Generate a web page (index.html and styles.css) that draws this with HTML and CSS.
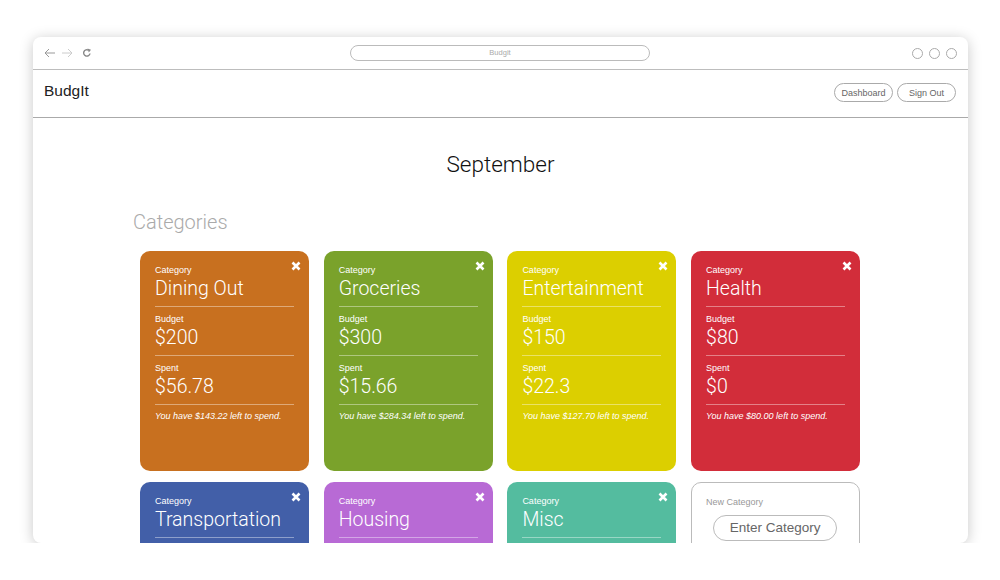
FILE: index.html
```html
<!DOCTYPE html>
<html lang="en">
<head>
    <meta charset="UTF-8">
    <meta name="viewport" content="width=device-width, initial-scale=1.0">
    <title>BudgIt</title>
    <link rel="stylesheet" href="styles.css">
</head>
<body>
    <div class="window">
        <div class="toolbar">
            <div class="nav-icons">
                <svg width="12" height="10" viewBox="0 0 12 10"><path d="M11 5H1M5 1L1 5l4 4" fill="none" stroke="#999" stroke-width="1"/></svg>
                <svg width="12" height="10" viewBox="0 0 12 10"><path d="M1 5h10M7 1l4 4-4 4" fill="none" stroke="#ccc" stroke-width="1"/></svg>
                <svg class="reload" width="10" height="10" viewBox="0 0 10 10"><path d="M8 5.5A3.2 3.2 0 1 1 6.5 2.2" fill="none" stroke="#888" stroke-width="1.4"/><path d="M5.5 0.5L9 1.8 6.8 4.6z" fill="#888"/></svg>
            </div>
            <div class="url-bar">Budgit</div>
            <div class="dots">
                <span class="dot"></span><span class="dot"></span><span class="dot"></span>
            </div>
        </div>

        <div class="header">
            <div class="logo">BudgIt</div>
            <div class="header-buttons">
                <button class="pill-btn">Dashboard</button>
                <button class="pill-btn">Sign Out</button>
            </div>
        </div>

        <div class="content">
            <h1 class="month">September</h1>
            <div class="section">
                <h2 class="section-title">Categories</h2>
                <div class="card-grid">
                    <div class="card orange">
                        <svg class="close" width="10" height="10" viewBox="0 0 10 10"><path d="M1.5 1.5l7 7M8.5 1.5l-7 7" stroke="#fff" stroke-width="2.6"/></svg>
                        <div class="field"><div class="label">Category</div><div class="value">Dining Out</div></div>
                        <div class="field"><div class="label">Budget</div><div class="value">$200</div></div>
                        <div class="field"><div class="label">Spent</div><div class="value">$56.78</div></div>
                        <p class="note">You have $143.22 left to spend.</p>
                    </div>
                    <div class="card green">
                        <svg class="close" width="10" height="10" viewBox="0 0 10 10"><path d="M1.5 1.5l7 7M8.5 1.5l-7 7" stroke="#fff" stroke-width="2.6"/></svg>
                        <div class="field"><div class="label">Category</div><div class="value">Groceries</div></div>
                        <div class="field"><div class="label">Budget</div><div class="value">$300</div></div>
                        <div class="field"><div class="label">Spent</div><div class="value">$15.66</div></div>
                        <p class="note">You have $284.34 left to spend.</p>
                    </div>
                    <div class="card yellow">
                        <svg class="close" width="10" height="10" viewBox="0 0 10 10"><path d="M1.5 1.5l7 7M8.5 1.5l-7 7" stroke="#fff" stroke-width="2.6"/></svg>
                        <div class="field"><div class="label">Category</div><div class="value">Entertainment</div></div>
                        <div class="field"><div class="label">Budget</div><div class="value">$150</div></div>
                        <div class="field"><div class="label">Spent</div><div class="value">$22.3</div></div>
                        <p class="note">You have $127.70 left to spend.</p>
                    </div>
                    <div class="card red">
                        <svg class="close" width="10" height="10" viewBox="0 0 10 10"><path d="M1.5 1.5l7 7M8.5 1.5l-7 7" stroke="#fff" stroke-width="2.6"/></svg>
                        <div class="field"><div class="label">Category</div><div class="value">Health</div></div>
                        <div class="field"><div class="label">Budget</div><div class="value">$80</div></div>
                        <div class="field"><div class="label">Spent</div><div class="value">$0</div></div>
                        <p class="note">You have $80.00 left to spend.</p>
                    </div>
                    <div class="card blue">
                        <svg class="close" width="10" height="10" viewBox="0 0 10 10"><path d="M1.5 1.5l7 7M8.5 1.5l-7 7" stroke="#fff" stroke-width="2.6"/></svg>
                        <div class="field"><div class="label">Category</div><div class="value">Transportation</div></div>
                    </div>
                    <div class="card purple">
                        <svg class="close" width="10" height="10" viewBox="0 0 10 10"><path d="M1.5 1.5l7 7M8.5 1.5l-7 7" stroke="#fff" stroke-width="2.6"/></svg>
                        <div class="field"><div class="label">Category</div><div class="value">Housing</div></div>
                    </div>
                    <div class="card teal">
                        <svg class="close" width="10" height="10" viewBox="0 0 10 10"><path d="M1.5 1.5l7 7M8.5 1.5l-7 7" stroke="#fff" stroke-width="2.6"/></svg>
                        <div class="field"><div class="label">Category</div><div class="value">Misc</div></div>
                    </div>
                    <div class="card new-card">
                        <div class="new-label">New Category</div>
                        <div class="enter-pill">Enter Category</div>
                    </div>
                </div>
            </div>
        </div>
    </div>
</body>
</html>
```

FILE: styles.css
```css
body {
    margin: 0;
    background: #fff;
    font-family: 'Liberation Sans', Arial, sans-serif;
    color: #222;
}
.window {
    margin: 37px 32px 0 33px;
    height: 506px;
    background: #fff;
    border-radius: 8px;
    box-shadow: 0 2px 14px rgba(0, 0, 0, 0.22);
    overflow: hidden;
}
.toolbar {
    height: 32px;
    border-bottom: 1px solid #bdbdbd;
    display: flex;
    align-items: center;
    padding: 0 11px;
}
.nav-icons {
    display: flex;
    align-items: center;
    gap: 5px;
    width: 300px;
}
.nav-icons .reload {
    margin-left: 4px;
}
.url-bar {
    width: 298px;
    height: 14px;
    margin-left: 6px;
    border: 1px solid #bbb;
    border-radius: 8px;
    font-size: 7.5px;
    line-height: 14px;
    color: #aaa;
    text-align: center;
}
.dots {
    margin-left: auto;
    display: flex;
    gap: 6px;
}
.dot {
    width: 9px;
    height: 9px;
    border: 1px solid #aaa;
    border-radius: 50%;
}
.header {
    height: 47px;
    border-bottom: 1px solid #aaa;
    display: flex;
    justify-content: space-between;
    padding: 0 12px 0 11px;
}
.logo {
    font-size: 15.5px;
    margin-top: 12px;
    color: #222;
}
.header-buttons {
    display: flex;
    gap: 4px;
    margin-top: 13px;
}
.pill-btn {
    width: 59px;
    height: 19px;
    padding: 0;
    border: 1px solid #aaa;
    border-radius: 10px;
    background: #fff;
    font-family: inherit;
    font-size: 9px;
    color: #666;
}
.content {
    padding-top: 33px;
}
.month {
    margin: 0;
    font-family: Roboto, 'Liberation Sans', sans-serif;
    font-size: 22.5px;
    font-weight: 300;
    line-height: 26px;
    text-align: center;
    color: #111;
}
.section {
    width: 735px;
    margin: 33px auto 0;
}
.section-title {
    margin: 0 0 17px;
    font-family: Roboto, 'Liberation Sans', sans-serif;
    font-size: 20px;
    font-weight: 300;
    line-height: 24px;
    color: #aaa;
}
.card-grid {
    display: grid;
    grid-template-columns: repeat(4, 169px);
    gap: 11px 14.7px;
    padding-left: 7px;
}
.card {
    height: 220px;
    border-radius: 10px;
    padding: 7px 15px 0;
    box-sizing: border-box;
    color: #fff;
    position: relative;
}
.close {
    position: absolute;
    top: 10px;
    right: 8px;
}
.field {
    padding: 6px 0 5px;
    border-bottom: 1px solid rgba(255, 255, 255, 0.4);
}
.label {
    font-size: 9px;
    line-height: 12px;
}
.value {
    padding-top: 1px;
    font-family: Roboto, 'Liberation Sans', sans-serif;
    font-size: 19.5px;
    font-weight: 300;
    line-height: 24px;
    white-space: nowrap;
}
.note {
    margin: 5px 0 0;
    font-size: 9px;
    line-height: 12px;
    font-style: italic;
}
.orange { background: #c8701f; }
.green { background: #7aa22b; }
.yellow { background: #dccf00; }
.red { background: #d22d3a; }
.blue { background: #425fa8; }
.purple { background: #b86ad5; }
.teal { background: #54bc9f; }
.new-card {
    border: 1px solid #bbb;
    background: #fff;
    padding: 13px 14px 0;
}
.new-label {
    font-size: 9px;
    line-height: 12px;
    color: #999;
}
.enter-pill {
    width: 122px;
    height: 24px;
    margin: 7px 0 0 7px;
    border: 1px solid #bbb;
    border-radius: 13px;
    font-size: 13.5px;
    line-height: 24px;
    text-align: center;
    color: #666;
}
```
